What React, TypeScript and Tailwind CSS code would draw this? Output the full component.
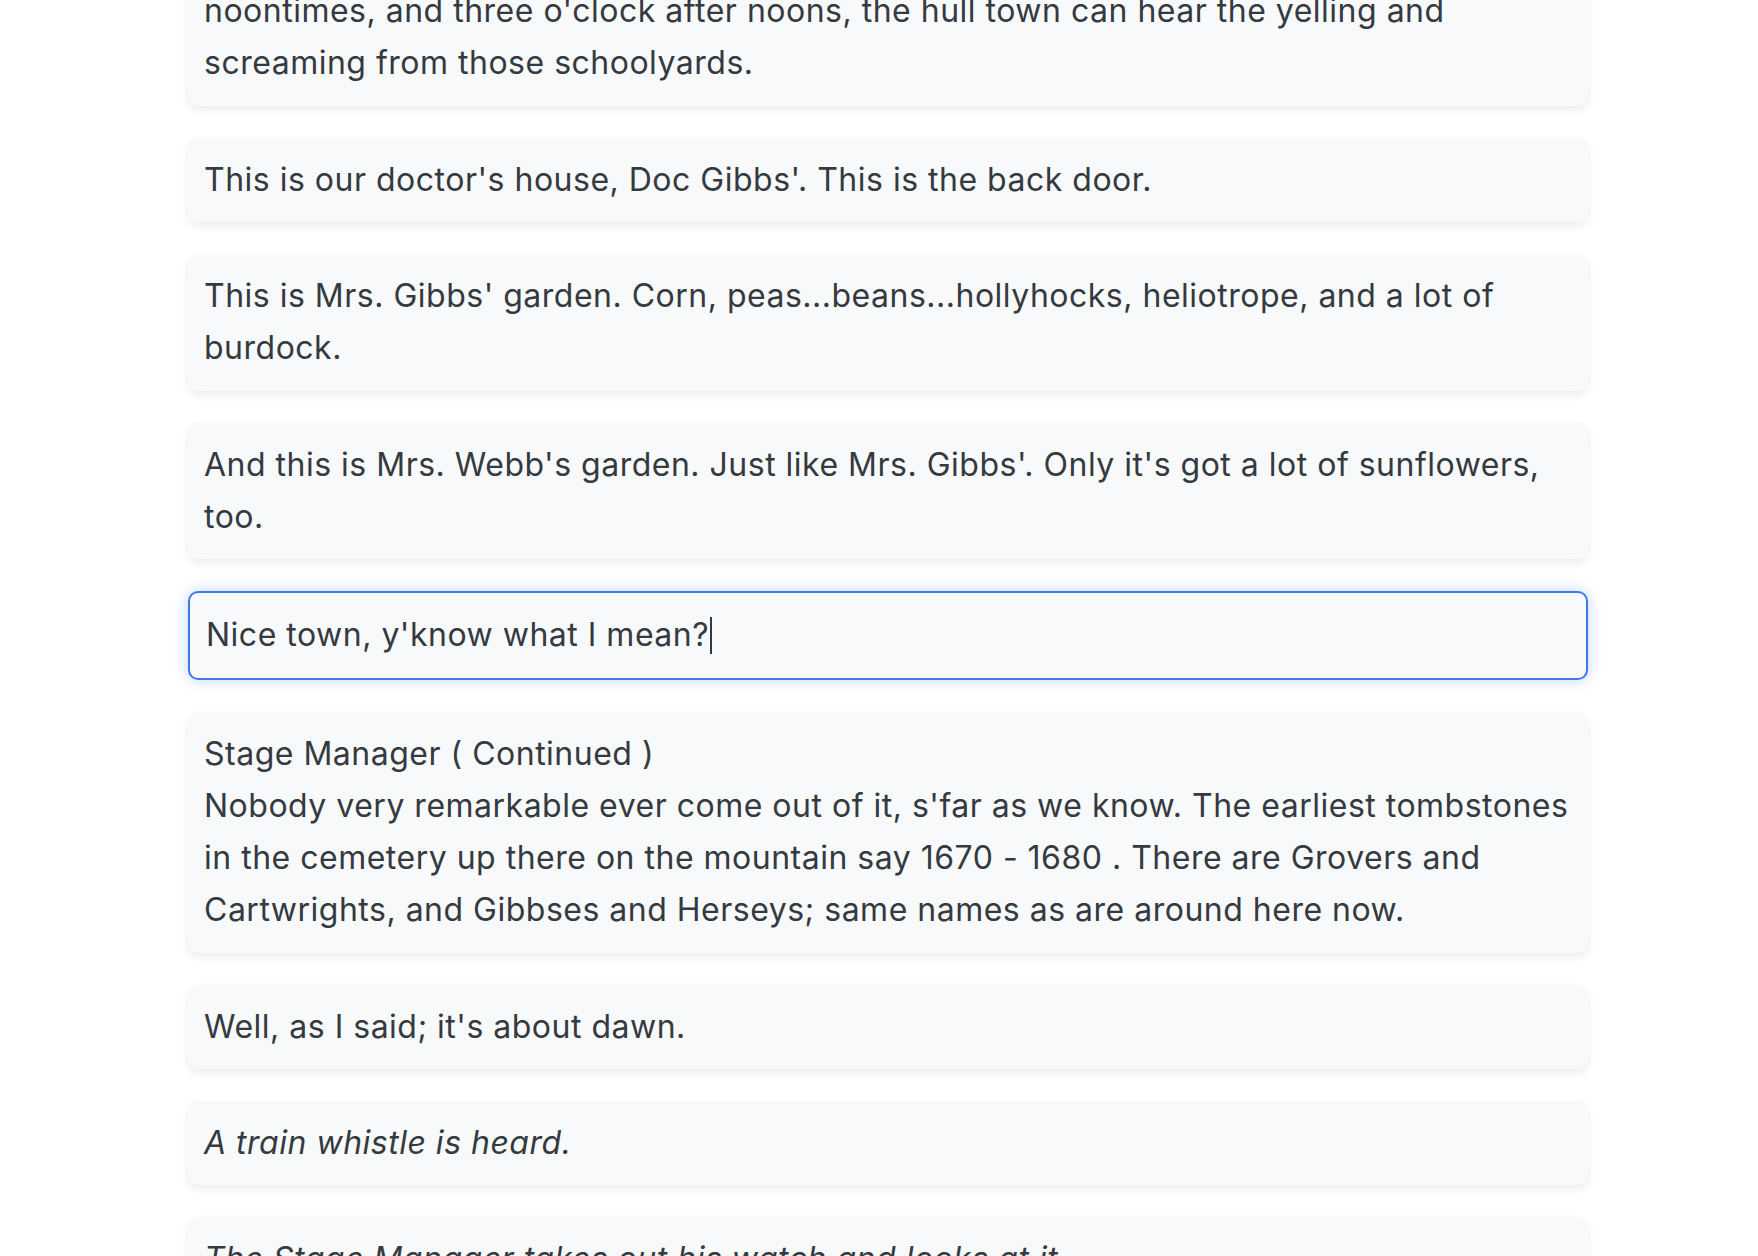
import React from "react";

const cardCls =
  "rounded-[10px] bg-[#f8f9fa] px-4 py-4 shadow-[0_4px_8px_rgba(0,0,0,0.075)]";

export default function App() {
  return (
    <div
      className="min-h-screen w-full overflow-hidden bg-white text-[32px] leading-[1.635] tracking-[0.5px] text-[#343a40]"
      style={{ fontFamily: "Inter, 'Noto Sans', sans-serif" }}
    >
      <div className="ml-[188px] mt-[-31px] flex w-[1400px] flex-col gap-8">
        <div className={cardCls}>
          <p>
            noontimes, and three o'clock after noons, the hull town can hear the yelling and
            screaming from those schoolyards.
          </p>
        </div>
        <div className={cardCls}>
          <p>This is our doctor's house, Doc Gibbs'. This is the back door.</p>
        </div>
        <div className={cardCls}>
          <p>
            This is Mrs. Gibbs' garden. Corn, peas...beans...hollyhocks, heliotrope, and a lot of
            burdock.
          </p>
        </div>
        <div className={cardCls}>
          <p>
            And this is Mrs. Webb's garden. Just like Mrs. Gibbs'. Only it's got a lot of
            sunflowers, too.
          </p>
        </div>
        <div className="rounded-[10px] border-2 border-[#3f7be6] bg-[#f8f9fa] px-4 py-4 shadow-[0_0_14px_rgba(40,110,250,0.3)]">
          <p className="flex items-center">
            <span>Nice town, y'know what I mean?</span>
            <span className="ml-[1px] inline-block h-[37px] w-[2px] bg-[#343a40]" />
          </p>
        </div>
        <div className={cardCls}>
          <p>Stage Manager ( Continued )</p>
          <p>
            Nobody very remarkable ever come out of it, s'far as we know. The earliest tombstones
            in the cemetery up there on the mountain say 1670 - 1680 . There are Grovers and
            Cartwrights, and Gibbses and Herseys; same names as are around here now.
          </p>
        </div>
        <div className={cardCls}>
          <p>Well, as I said; it's about dawn.</p>
        </div>
        <div className={cardCls}>
          <p className="italic">A train whistle is heard.</p>
        </div>
        <div className={cardCls}>
          <p className="italic">The Stage Manager takes out his watch and looks at it.</p>
        </div>
      </div>
    </div>
  );
}
